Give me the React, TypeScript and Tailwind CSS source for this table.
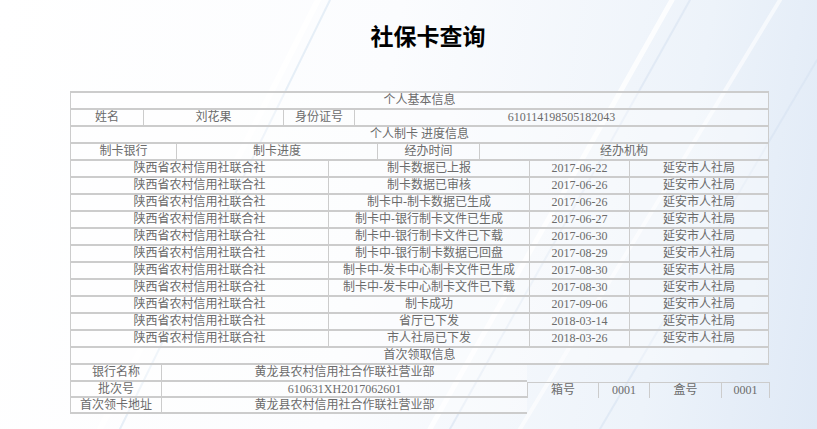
import React from "react";

const LINE = "border-[#cccccc]";
const FONT = "font-['Liberation_Serif','Noto_Sans_CJK_SC',serif]";

const progress: [string, string][] = [
  ["制卡数据已上报", "2017-06-22"],
  ["制卡数据已审核", "2017-06-26"],
  ["制卡中-制卡数据已生成", "2017-06-26"],
  ["制卡中-银行制卡文件已生成", "2017-06-27"],
  ["制卡中-银行制卡文件已下载", "2017-06-30"],
  ["制卡中-银行制卡数据已回盘", "2017-08-29"],
  ["制卡中-发卡中心制卡文件已生成", "2017-08-30"],
  ["制卡中-发卡中心制卡文件已下载", "2017-08-30"],
  ["制卡成功", "2017-09-06"],
  ["省厅已下发", "2018-03-14"],
  ["市人社局已下发", "2018-03-26"],
];

function Row({ children }: { children: React.ReactNode }) {
  return <div className={`flex h-[17px] border-b-2 ${LINE} leading-[15px]`}>{children}</div>;
}

function Cell({ w, first, children }: { w?: string; first?: boolean; children?: React.ReactNode }) {
  return (
    <div className={`${w ?? "flex-1"} ${first ? "" : `border-l ${LINE}`} truncate text-center`}>
      {children}
    </div>
  );
}

function Title({ children }: { children: React.ReactNode }) {
  return (
    <Row>
      <div className="flex-1 text-center">{children}</div>
    </Row>
  );
}

export default function App() {
  return (
    <div
      className={`relative h-[429px] w-[817px] overflow-hidden bg-[linear-gradient(100deg,#ffffff_0%,#fbfcfe_45%,#edf3fa_80%,#dfe9f6_100%)] ${FONT} text-[12px] text-[#6b6b6b]`}
    >
      {/* background streaks */}
      <svg className="absolute inset-0" width="817" height="429" viewBox="0 0 817 429">
        <g fill="none" strokeLinecap="round">
          <path d="M330 0 L120 429" stroke="#dde8f4" strokeWidth="2" opacity="0.7" />
          <path d="M318 0 L100 429" stroke="#ffffff" strokeWidth="6" opacity="0.8" />
          <path d="M690 0 L450 429" stroke="#dbe6f2" strokeWidth="2" opacity="0.7" />
          <path d="M672 0 L430 429" stroke="#ffffff" strokeWidth="5" opacity="0.8" />
          <path d="M817 60 L600 429" stroke="#d7e3f1" strokeWidth="2" opacity="0.6" />
          <path d="M780 0 L520 429" stroke="#ffffff" strokeWidth="4" opacity="0.6" />
        </g>
      </svg>

      <div className="relative">
        <div className="h-[91px] pl-[39px] pt-[20px] text-center font-['Noto_Sans_CJK_SC',sans-serif] text-[23px] font-bold leading-[30px] text-black">
          社保卡查询
        </div>

        <div className={`ml-[70px] w-[699px] border-x border-t-2 ${LINE} bg-white/40`}>
          <Title>个人基本信息</Title>
          <Row>
            <Cell w="w-[72px]" first>姓名</Cell>
            <Cell w="w-[140px]">刘花果</Cell>
            <Cell w="w-[71px]">身份证号</Cell>
            <Cell>610114198505182043</Cell>
          </Row>
          <Title>个人制卡 进度信息</Title>
          <Row>
            <Cell w="w-[105px]" first>制卡银行</Cell>
            <Cell w="w-[201px]">制卡进度</Cell>
            <Cell w="w-[102px]">经办时间</Cell>
            <Cell>经办机构</Cell>
          </Row>
          {progress.map(([status, date], i) => (
            <Row key={i}>
              <Cell w="w-[257px]" first>陕西省农村信用社联合社</Cell>
              <Cell w="w-[201px]">{status}</Cell>
              <Cell w="w-[100px]">{date}</Cell>
              <Cell>延安市人社局</Cell>
            </Row>
          ))}
          <Title>首次领取信息</Title>
        </div>

        <div className="ml-[70px] w-[700px]">
          <div className={`flex h-[17px] w-[457px] border-b-2 border-l ${LINE} bg-white/40 leading-[15px]`}>
            <Cell w="w-[90px]" first>银行名称</Cell>
            <Cell>黄龙县农村信用社合作联社营业部</Cell>
          </div>
          <div className="flex h-[16px] leading-[15px]">
            <div className={`flex w-[457px] border-b-2 border-l ${LINE} bg-white/40`}>
              <Cell w="w-[90px]" first>批次号</Cell>
              <Cell>610631XH2017062601</Cell>
            </div>
            <div className={`flex flex-1 border-x border-t ${LINE}`}>
              <Cell w="w-[70px]" first>箱号</Cell>
              <Cell w="w-[51px]">0001</Cell>
              <Cell w="w-[72px]">盒号</Cell>
              <Cell>0001</Cell>
            </div>
          </div>
          <div className={`flex h-[16px] w-[457px] border-b-2 border-l ${LINE} bg-white/40 leading-[15px]`}>
            <Cell w="w-[90px]" first>首次领卡地址</Cell>
            <Cell>黄龙县农村信用社合作联社营业部</Cell>
          </div>
        </div>
      </div>
    </div>
  );
}
